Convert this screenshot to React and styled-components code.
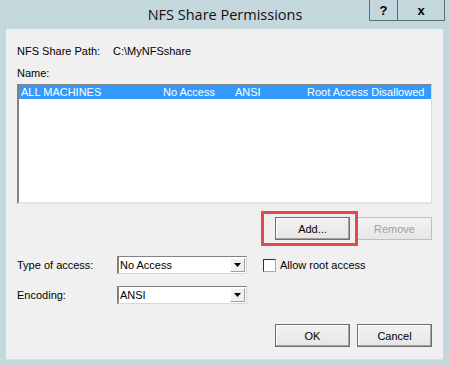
import React, { useState } from "react";
import styled, { createGlobalStyle } from "styled-components";

const GlobalStyle = createGlobalStyle`
  html, body {
    margin: 0;
    padding: 0;
    background: #c4d7dd;
    width: 450px;
    height: 366px;
    overflow: hidden;
  }
`;

const Window = styled.div`
  width: 450px;
  height: 366px;
  display: flex;
  flex-direction: column;
  background: #c4d7dd;
  font-family: "Liberation Sans", Arial, sans-serif;
  font-size: 11px;
  color: #000;
`;

const TitleBar = styled.div`
  position: relative;
  height: 29px;
  display: flex;
  align-items: center;
  justify-content: center;
`;

const TitleText = styled.div`
  font-family: "Open Sans", "Noto Sans", sans-serif;
  font-size: 14.5px;
  color: #111;
`;

const CaptionButtons = styled.div`
  position: absolute;
  top: 0;
  right: 5px;
  display: flex;
  height: 20px;
  border: 1px solid #5c6f76;
  border-top: none;
`;

const CaptionButton = styled.div`
  width: ${({ wide }) => (wide ? "46px" : "27px")};
  display: flex;
  align-items: center;
  justify-content: center;
  font-family: "Liberation Sans", Arial, sans-serif;
  font-weight: bold;
  font-size: 13px;
  border-left: ${({ wide }) => (wide ? "1px solid #5c6f76" : "none")};
`;

const Panel = styled.div`
  margin: 0 7px 0 6px;
  height: 330px;
  background: #f0f0f0;
  border-bottom: 1px solid #d7dfe2;
  display: flex;
  flex-direction: column;
  padding: 0 11px 0 11px;
`;

const PathRow = styled.div`
  display: flex;
  margin-top: 16px;
  height: 13px;
  line-height: 13px;
`;

const PathLabel = styled.span`
  width: 96px;
`;

const NameLabel = styled.div`
  margin-top: 9px;
  height: 13px;
  line-height: 13px;
`;

const ListBox = styled.div`
  margin-top: 4px;
  height: 120px;
  background: #fff;
  border-top: 1px solid #828282;
  border-left: 2px solid #828282;
  border-right: 1px solid #dcdcdc;
  border-bottom: 2px solid #e3e3e3;
  box-sizing: border-box;
`;

const ListRow = styled.div`
  display: flex;
  height: 14px;
  line-height: 14px;
  background: ${({ selected }) => (selected ? "#3399ff" : "transparent")};
  color: ${({ selected }) => (selected ? "#fff" : "#000")};
  padding-left: 2px;
`;

const Cell = styled.span`
  width: ${({ w }) => w}px;
  white-space: nowrap;
`;

const ButtonRow = styled.div`
  display: flex;
  justify-content: flex-end;
  gap: 7px;
  margin-top: 13px;
`;

const Highlighted = styled.div`
  position: relative;
  display: flex;
  &::after {
    content: "";
    position: absolute;
    left: -14px;
    right: -8px;
    top: -6px;
    bottom: -6px;
    border: 3px solid #e34a4a;
    pointer-events: none;
  }
`;

const Button = styled.div`
  width: 75px;
  height: 23px;
  box-sizing: border-box;
  display: flex;
  align-items: center;
  justify-content: center;
  background: linear-gradient(#f2f2f2, #e6e6e6);
  border: 1px solid ${({ disabled }) => (disabled ? "#bfbfbf" : "#707070")};
  box-shadow: ${({ disabled }) =>
    disabled ? "none" : "inset -1px -1px 0 #a0a0a0, inset 1px 1px 0 #fff"};
  color: ${({ disabled }) => (disabled ? "#a0a0a0" : "#000")};
`;

const FieldGrid = styled.div`
  display: grid;
  grid-template-columns: 100px 130px auto;
  row-gap: 12px;
  column-gap: 0;
  align-items: center;
  margin-top: 16px;
`;

const Select = styled.div`
  height: 18px;
  box-sizing: border-box;
  display: flex;
  align-items: center;
  justify-content: space-between;
  background: #fff;
  border-top: 1px solid #828282;
  border-left: 2px solid #828282;
  border-right: 1px solid #d8d8d8;
  border-bottom: 1px solid #d8d8d8;
  padding-left: 1px;
`;

const Arrow = styled.div`
  width: 15px;
  height: 14px;
  margin-right: 1px;
  box-sizing: border-box;
  background: #f0f0f0;
  border: 1px solid #a0a0a0;
  border-top-color: #fff;
  border-left-color: #fff;
  display: flex;
  align-items: center;
  justify-content: center;
`;

const CheckLabel = styled.label`
  display: flex;
  align-items: center;
  gap: 4px;
  margin-left: 16px;
`;

const CheckBox = styled.span`
  width: 13px;
  height: 13px;
  box-sizing: border-box;
  background: #fff;
  border: 1px solid #333;
  border-right-color: #aaa;
  border-bottom-color: #aaa;
`;

const Footer = styled.div`
  display: flex;
  justify-content: flex-end;
  gap: 7px;
  margin-top: 20px;
`;

const DownIcon = () => (
  <svg width="7" height="4" viewBox="0 0 7 4">
    <path d="M0 0h7L3.5 4z" fill="#000" />
  </svg>
);

export default function App() {
  const [rows] = useState([
    { host: "ALL MACHINES", access: "No Access", enc: "ANSI", root: "Root Access Disallowed" },
  ]);

  return (
    <Window>
      <GlobalStyle />
      <TitleBar>
        <TitleText>NFS Share Permissions</TitleText>
        <CaptionButtons>
          <CaptionButton>?</CaptionButton>
          <CaptionButton wide>x</CaptionButton>
        </CaptionButtons>
      </TitleBar>
      <Panel>
        <PathRow>
          <PathLabel>NFS Share Path:</PathLabel>
          <span>C:\MyNFSshare</span>
        </PathRow>
        <NameLabel>Name:</NameLabel>
        <ListBox>
          {rows.map((r) => (
            <ListRow key={r.host} selected>
              <Cell w={142}>{r.host}</Cell>
              <Cell w={72}>{r.access}</Cell>
              <Cell w={72}>{r.enc}</Cell>
              <Cell>{r.root}</Cell>
            </ListRow>
          ))}
        </ListBox>
        <ButtonRow>
          <Highlighted>
            <Button>Add...</Button>
          </Highlighted>
          <Button disabled>Remove</Button>
        </ButtonRow>
        <FieldGrid>
          <span>Type of access:</span>
          <Select>
            No Access
            <Arrow>
              <DownIcon />
            </Arrow>
          </Select>
          <CheckLabel>
            <CheckBox />
            Allow root access
          </CheckLabel>
          <span>Encoding:</span>
          <Select>
            ANSI
            <Arrow>
              <DownIcon />
            </Arrow>
          </Select>
          <span />
        </FieldGrid>
        <Footer>
          <Button>OK</Button>
          <Button>Cancel</Button>
        </Footer>
      </Panel>
    </Window>
  );
}
